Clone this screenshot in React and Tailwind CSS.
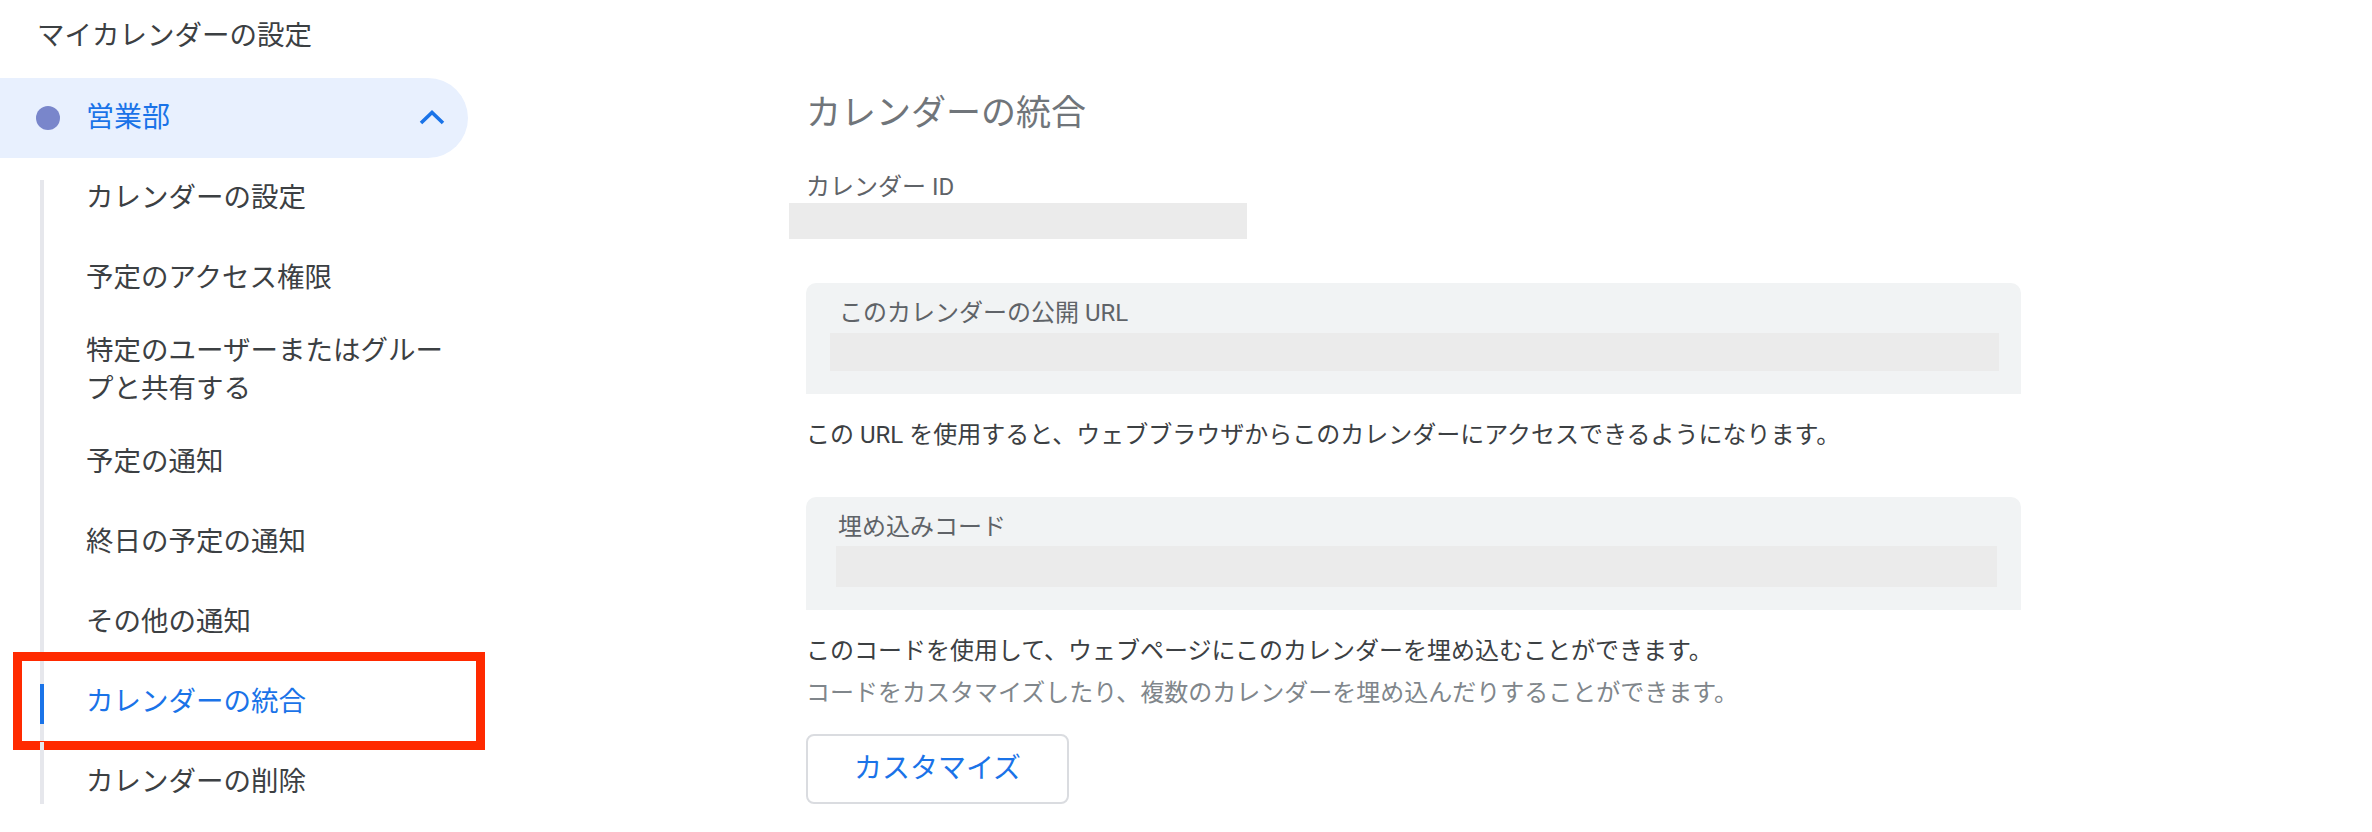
import React from 'react';

const font = { fontFamily: 'Roboto, "Noto Sans CJK JP", sans-serif' };

const items = [
  { label: 'カレンダーの設定' },
  { label: '予定のアクセス権限' },
  { label: '特定のユーザーまたはグループと共有する' },
  { label: '予定の通知' },
  { label: '終日の予定の通知' },
  { label: 'その他の通知' },
  { label: 'カレンダーの統合', active: true },
  { label: 'カレンダーの削除' },
];

const SideItem = ({ label, active, first, last }) => (
  <div className="relative flex pl-[40px]">
    <div
      className={`w-[4px] shrink-0 self-stretch bg-[#e6e7ec] flex items-center ${first ? 'mt-[22px]' : ''} ${last ? 'mb-[18px]' : ''}`}
    >
      {active && <div className="w-[4px] h-[40px] mt-[4px] bg-[#1a73e8]" />}
    </div>
    <div
      className={`ml-[42px] min-h-[80px] py-[14px] flex items-center text-[27.5px] leading-[38px] w-[382px] ${active ? 'text-[#1a73e8]' : 'text-[#3c4043]'}`}
    >
      {label}
    </div>
    {active && (
      <div className="absolute left-[13px] top-[-10px] w-[472px] h-[98px] border-[9px] border-[#ff2a00] pointer-events-none" />
    )}
  </div>
);

const FieldBox = ({ label, barClass, labelPad }) => (
  <div className="w-[1215px] bg-[#f1f3f4] rounded-t-[10px] px-[22px] pb-[23px] pt-[14px]">
    <div className={`text-[24px] leading-[32px] text-[#5f6368] ${labelPad}`}>{label}</div>
    <div className={`bg-[#ebebeb] ${barClass}`} />
  </div>
);

export default function App() {
  return (
    <div className="flex w-[2372px] h-[832px] bg-white overflow-hidden" style={font}>
      <aside className="w-[468px] shrink-0">
        <div className="pt-[17px] pl-[37px] text-[27.5px] leading-[38px] text-[#3c4043]">
          マイカレンダーの設定
        </div>
        <div className="mt-[23px] h-[80px] w-[468px] rounded-r-full bg-[#e8f0fe] flex items-center pl-[36px]">
          <span className="w-[24px] h-[24px] rounded-full bg-[#7986cb]" />
          <span className="ml-[26px] text-[28px] leading-[38px] text-[#1a73e8]">営業部</span>
          <svg className="ml-auto mr-[23px]" width="26" height="16" viewBox="0 0 26 16" fill="none">
            <polyline points="2,13 13,2.5 24,13" stroke="#1a73e8" strokeWidth="3.6" />
          </svg>
        </div>
        <div className="flex flex-col">
          {items.map((it, i) => (
            <SideItem key={it.label} {...it} first={i === 0} last={i === items.length - 1} />
          ))}
        </div>
      </aside>

      <main className="ml-[338px] pt-[90px] flex flex-col items-start">
        <h2 className="text-[35px] leading-[48px] text-[#70757a]">カレンダーの統合</h2>
        <div className="mt-[33px] text-[24px] leading-[32px] text-[#5f6368]">カレンダー ID</div>
        <div className="-ml-[17px] w-[458px] h-[36px] bg-[#ebebeb]" />

        <div className="mt-[44px]">
          <FieldBox label="このカレンダーの公開 URL" labelPad="pl-[11px]" barClass="mt-[4px] h-[38px] ml-[2px]" />
        </div>
        <p className="mt-[23px] text-[24px] leading-[36px] text-[#3c4043]">
          この URL を使用すると、ウェブブラウザからこのカレンダーにアクセスできるようになります。
        </p>

        <div className="mt-[44px]">
          <FieldBox label="埋め込みコード" labelPad="pl-[10px]" barClass="mt-[3px] h-[41px] ml-[8px] mr-[2px]" />
        </div>
        <p className="mt-[23px] text-[24px] leading-[36px] text-[#3c4043]">
          このコードを使用して、ウェブページにこのカレンダーを埋め込むことができます。
        </p>
        <p className="mt-[6px] text-[24px] leading-[36px] text-[#80868b]">
          コードをカスタマイズしたり、複数のカレンダーを埋め込んだりすることができます。
        </p>
        <button className="mt-[23px] w-[263px] h-[70px] rounded-[8px] border-2 border-[#dadce0] bg-white text-[28px] text-[#1a73e8] flex items-center justify-center">
          カスタマイズ
        </button>
      </main>
    </div>
  );
}
